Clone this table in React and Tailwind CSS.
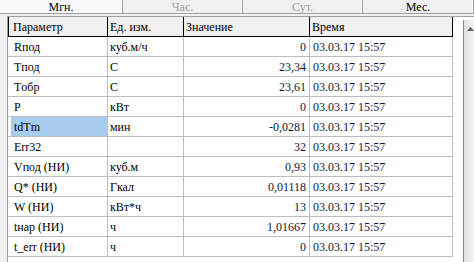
import React from "react";

const ROWS = [
  ["Rпод", "куб.м/ч", "0"],
  ["Tпод", "С", "23,34"],
  ["Tобр", "С", "23,61"],
  ["P", "кВт", "0"],
  ["tdTm", "мин", "-0,0281"],
  ["Err32", "", "32"],
  ["Vпод (НИ)", "куб.м", "0,93"],
  ["Q* (НИ)", "Гкал", "0,01118"],
  ["W (НИ)", "кВт*ч", "13"],
  ["tнар (НИ)", "ч", "1,01667"],
  ["t_err (НИ)", "ч", "0"],
];

const TABS = [
  { label: "Мгн.", w: "w-[123px]", active: true },
  { label: "Час.", w: "w-[120px]", disabled: true },
  { label: "Сут.", w: "w-[120px]", disabled: true },
  { label: "Мес.", w: "flex-1" },
];

export default function App() {
  return (
    <div className="w-[474px] h-[262px] overflow-hidden bg-[#f0f0f0] flex flex-col text-[12px] leading-none text-black"
      style={{ fontFamily: '"Liberation Serif", "Times New Roman", serif' }}>
      {/* tabs */}
      <div className="flex h-[14px] shrink-0">
        {TABS.map((t) => (
          <div key={t.label}
            className={`${t.w} h-full flex items-center justify-center border-b border-r border-b-[#a0a0a0] border-r-[#a0a0a0] shadow-[inset_-1px_0_0_#ffffff] ${t.active ? "bg-[#f9f9f9]" : "bg-[#f0f0f0]"} ${t.disabled ? "text-[#a0a0a0]" : "text-black"}`}>
            {t.label}
          </div>
        ))}
      </div>

      <div className="flex flex-1 pt-[2px] min-h-0">
        <div className="w-[7px] shrink-0" />
        <div className="flex-1 flex bg-white border-l border-t border-[#a0a0a0] min-h-0">
          {/* grid */}
          <div className="w-[445px] shrink-0">
            <div className="grid grid-cols-[100px_76px_126px_143px] h-[20px] bg-[#f0f0f0] border-b border-black">
              <div className="border-l border-r border-black pl-[4px] flex items-center">Параметр</div>
              <div className="border-r border-black pl-[2px] flex items-center">Ед. изм.</div>
              <div className="border-r border-black pl-[2px] flex items-center">Значение</div>
              <div className="border-r border-black pl-[2px] flex items-center">Время</div>
            </div>
            {ROWS.map(([name, unit, value]) => (
              <div key={name} className="grid grid-cols-[100px_76px_126px_143px] h-[20px] border-b border-[#bdbdbd]">
                <div className="border-r border-[#bdbdbd] pl-[3px] py-0 flex">
                  <div className={`flex-1 flex items-center pl-[3px] ${name === "tdTm" ? "bg-[#a8cbf0]" : ""}`}>{name}</div>
                </div>
                <div className="border-r border-[#bdbdbd] pl-[2px] flex items-center">{unit}</div>
                <div className="border-r border-[#bdbdbd] pr-[3px] flex items-center justify-end text-[#0d1a3c]">{value}</div>
                <div className="border-r border-[#bdbdbd] pl-[3px] flex items-center text-[#0d1a3c]">03.03.17 15:57</div>
              </div>
            ))}
          </div>
          <div className="flex-1" />
          {/* scrollbar */}
          <div className="w-[11px] shrink-0 mt-[3px] border-l border-[#8a8a8a] bg-gradient-to-r from-[#e2e2e2] to-[#f4f4f4] flex flex-col">
            <div className="h-[17px] flex items-center justify-center pl-[2px]">
              <svg width="7" height="4" viewBox="0 0 7 4">
                <path d="M0 4 L3.5 0 L7 4 Z" fill="#606060" />
              </svg>
            </div>
          </div>
        </div>
      </div>
    </div>
  );
}
